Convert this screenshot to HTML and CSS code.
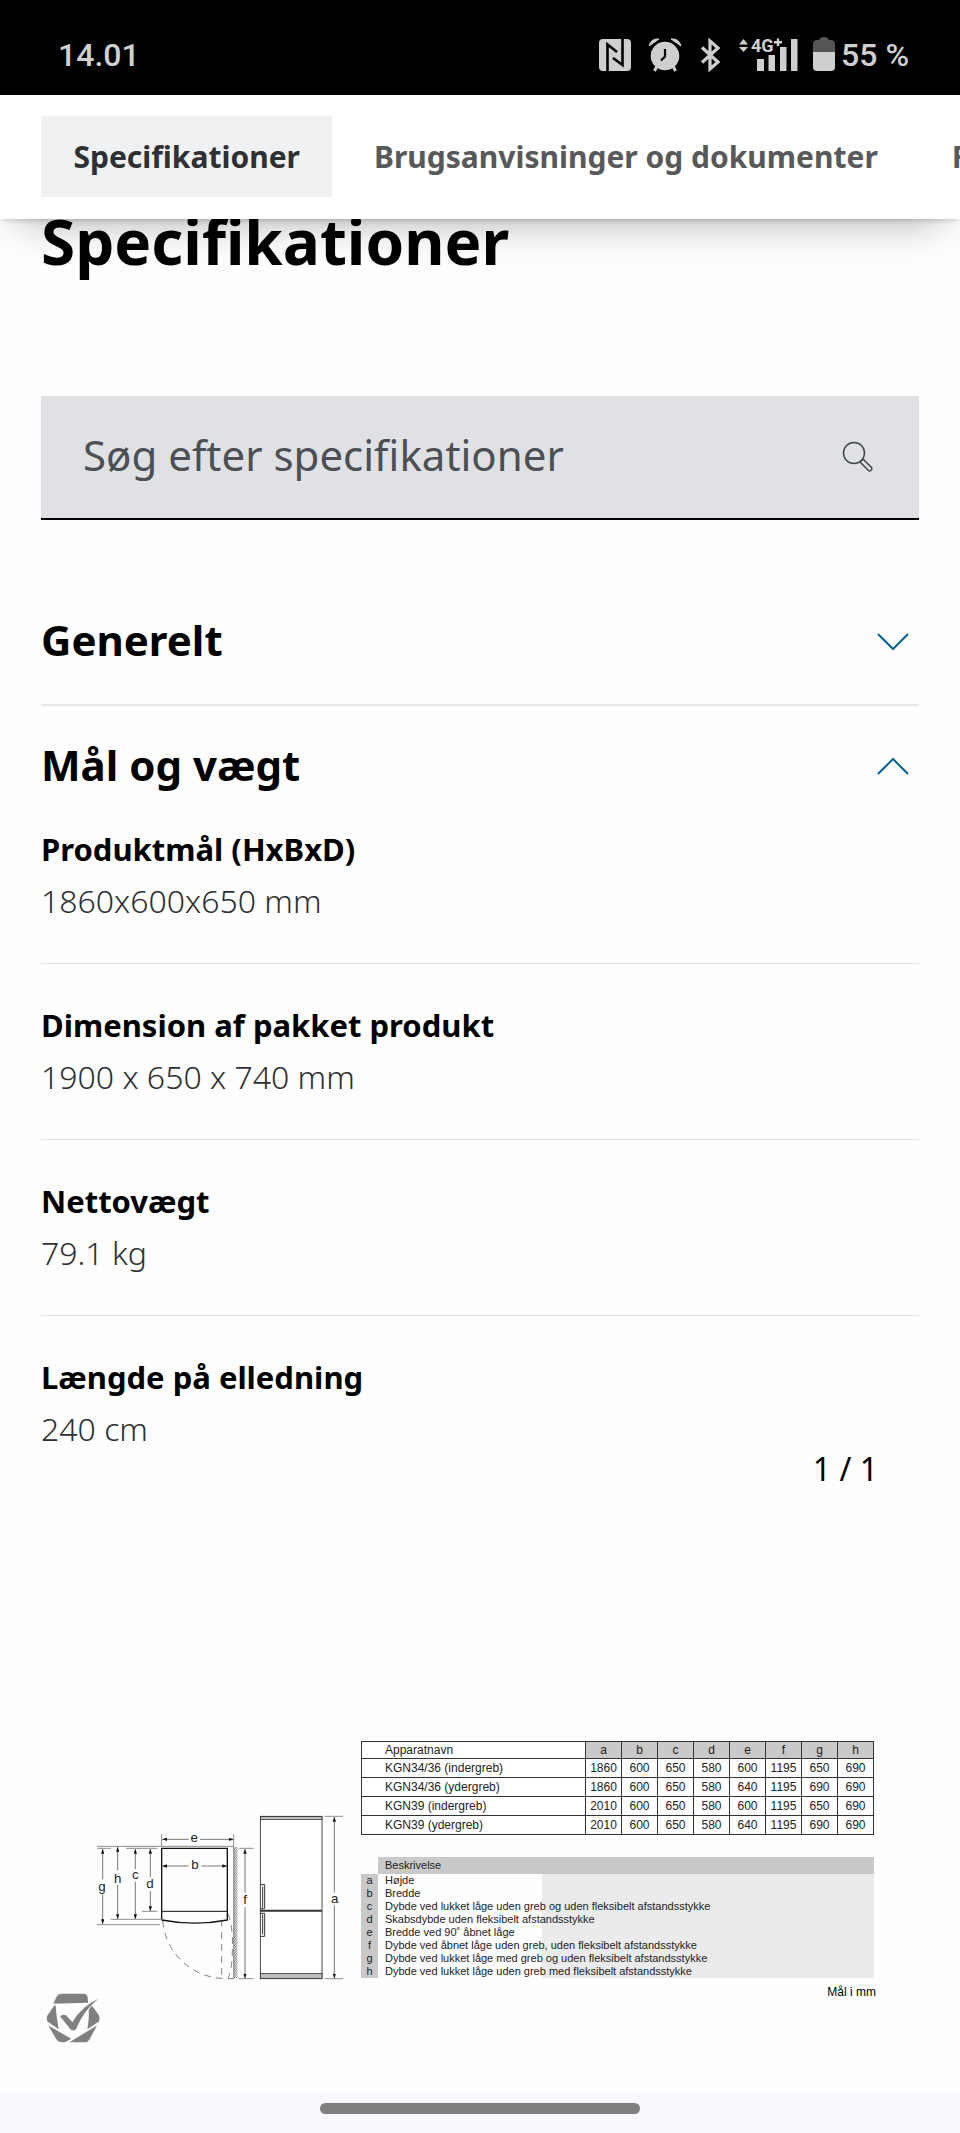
FILE: index.html
```html
<!DOCTYPE html>
<html lang="da">
<head>
    <meta charset="UTF-8">
    <meta name="viewport" content="width=device-width, initial-scale=1.0">
    <title>Specifikationer</title>
    <link rel="stylesheet" href="styles.css">
</head>
<body>
    <div class="status-bar">
        <span class="clock">14.01</span>
        <div class="status-icons">
            <svg width="32" height="34" viewBox="0 0 32 34">
                <rect x="0" y="1" width="32" height="32" rx="4" fill="#cfcfcf"/>
                <path d="M8.500 33V6.500L18 14M23.500 1V27L14 20" fill="none" stroke="#000" stroke-width="2.600"/>
            </svg>
            <svg width="32" height="34" viewBox="0 0 32 34">
                <path d="M0 8Q2 0 10 1ZM32 8Q30 0 22 1Z" fill="#cfcfcf" stroke="#cfcfcf" stroke-linejoin="round"/>
                <path d="M8 28L5.500 33M24 28L26.500 33" stroke="#cfcfcf" stroke-width="3"/>
                <circle cx="16" cy="18" r="14.300" fill="#cfcfcf"/>
                <path d="M16 11V18.500L12 22.500" fill="none" stroke="#000" stroke-width="2.200"/>
            </svg>
            <svg width="22" height="34" viewBox="0 0 22 34">
                <path d="M3 9.500L19 24L11 31V3L19 10L3 24.500" fill="none" stroke="#cfcfcf" stroke-width="3.200"/>
            </svg>
            <svg width="60" height="34" viewBox="0 0 60 34">
                <path d="M0 6.500L4.500 1L9 6.500ZM0 9L4.500 14L9 9Z" fill="#cfcfcf"/>
                <text x="12" y="14" class="network">4G</text>
                <path d="M39 0.500V8M35 4.200H43" stroke="#cfcfcf" stroke-width="2.400"/>
                <path d="M18 21h7v12h-7ZM29.500 17h6.500v16h-6.500ZM41 9h6.500v24h-6.500ZM52 1h6.500v32h-6.500Z" fill="#cfcfcf"/>
            </svg>
            <svg class="battery" width="22" height="34" viewBox="0 0 22 34">
                <path d="M0 14V6Q0 2 4 2H6Q7 -1 11 -1Q15 -1 16 2H18Q22 2 22 6V14Z" fill="#555"/>
                <path d="M0 14H22V29Q22 33 18 33H4Q0 33 0 29Z" fill="#cfcfcf"/>
            </svg>
            <span class="charge">55 %</span>
        </div>
    </div>

    <nav class="tabs">
        <div class="tab-list">
            <a href="#" class="tab">r</a>
            <a href="#specifikationer" class="tab active">Specifikationer</a>
            <a href="#" class="tab">Brugsanvisninger og dokumenter</a>
            <a href="#" class="tab">F</a>
        </div>
    </nav>

    <main>
        <h1 id="specifikationer">Specifikationer</h1>

        <form class="search">
            <input type="text" id="search-input" placeholder="Søg efter specifikationer" aria-label="Søg efter specifikationer">
            <label for="search-input">
                <svg width="32" height="32" viewBox="0 0 32 32" fill="none" stroke="#43464a" stroke-width="1.500">
                    <circle cx="12" cy="12" r="10.500"/>
                    <path d="M18 21L21 18L29.500 26.500Q30.500 28 29 29.500Q27.500 30.500 26.500 29.500Z"/>
                </svg>
            </label>
        </form>

        <section class="group">
            <button type="button" class="group-header" aria-expanded="false">
                <span>Generelt</span>
                <svg width="32" height="20" viewBox="0 0 32 20"><path d="M1 4L16 19L31 4"/></svg>
            </button>
        </section>

        <section class="group">
            <button type="button" class="group-header" aria-expanded="true">
                <span>Mål og vægt</span>
                <svg width="32" height="20" viewBox="0 0 32 20"><path d="M1 19L16 4L31 19"/></svg>
            </button>
            <dl class="specs">
                <div class="spec">
                    <dt>Produktmål (HxBxD)</dt>
                    <dd>1860x600x650 mm</dd>
                </div>
                <div class="spec">
                    <dt>Dimension af pakket produkt</dt>
                    <dd>1900 x 650 x 740 mm</dd>
                </div>
                <div class="spec">
                    <dt>Nettovægt</dt>
                    <dd>79.1 kg</dd>
                </div>
                <div class="spec">
                    <dt>Længde på elledning</dt>
                    <dd>240 cm</dd>
                </div>
            </dl>
        </section>

        <p class="counter">1 / 1</p>

        <div class="drawing">
            <svg class="diagram" width="264" height="238" viewBox="51 60 792 714">
                <defs>
                    <marker id="arrow" viewBox="0 0 14 10" refX="14" refY="5" markerWidth="14" markerHeight="10" markerUnits="userSpaceOnUse" orient="auto-start-reverse">
                        <path d="M0 0L14 5L0 10Z" fill="#111"/>
                    </marker>
                    <pattern id="wall" width="8" height="8" patternUnits="userSpaceOnUse">
                        <path d="M0 8L8 0" stroke="#222" stroke-width="2.500"/>
                    </pattern>
                </defs>

                <!-- extension lines -->
                <g stroke="#555" stroke-width="2">
                    <path d="M51 376H461M51 382H93M138 382H232M186 571H232M92 595H244M51 611H240"/>
                    <path d="M245 340V376M461 340V773M476 382H521M476 773H521M734 286H789M734 773H789"/>
                </g>

                <!-- dimension arrows -->
                <g stroke="#333" stroke-width="2">
                    <path d="M68 475V384" marker-end="url(#arrow)"/>
                    <path d="M68 520V609" marker-end="url(#arrow)"/>
                    <path d="M113 448V378" marker-end="url(#arrow)"/>
                    <path d="M113 492V594" marker-end="url(#arrow)"/>
                    <path d="M166 444V384" marker-end="url(#arrow)"/>
                    <path d="M166 482V594" marker-end="url(#arrow)"/>
                    <path d="M211 468V384" marker-end="url(#arrow)"/>
                    <path d="M211 510V570" marker-end="url(#arrow)"/>
                    <path d="M326 355H247" marker-end="url(#arrow)"/>
                    <path d="M360 355H460" marker-end="url(#arrow)"/>
                    <path d="M326 435H247" marker-end="url(#arrow)"/>
                    <path d="M364 435H441" marker-end="url(#arrow)"/>
                    <path d="M495 515V384" marker-end="url(#arrow)"/>
                    <path d="M495 558V772" marker-end="url(#arrow)"/>
                    <path d="M763 515V288" marker-end="url(#arrow)"/>
                    <path d="M763 553V772" marker-end="url(#arrow)"/>
                </g>

                <!-- cabinet from above -->
                <rect x="461" y="378" width="11" height="394" fill="url(#wall)"/>
                <path d="M245 595V382H442V597Q345 616 245 597" fill="none" stroke="#111" stroke-width="4"/>
                <path d="M245 571H442" stroke="#111" stroke-width="3"/>
                <path d="M248 600C255 690 330 773 440 773H461M425 597V770M444 578Q460 620 457 690Q456 750 444 772" fill="none" stroke="#444" stroke-width="2" stroke-dasharray="20 16"/>

                <!-- cabinet from the front -->
                <rect x="541" y="286" width="185" height="487" fill="#fff" stroke="#222" stroke-width="2.500"/>
                <rect x="541" y="287" width="185" height="9" fill="#bbb" stroke="#222" stroke-width="2"/>
                <rect x="541" y="757" width="185" height="16" fill="#bbb" stroke="#222" stroke-width="2"/>
                <path d="M541 569H726" stroke="#333" stroke-width="6"/>
                <path d="M541 491H554V563H541M541 577H554V646H541M548 497V560M548 580V640" fill="none" stroke="#333" stroke-width="3"/>

                <g class="dimension">
                    <text x="66" y="509">g</text>
                    <text x="113" y="486">h</text>
                    <text x="166" y="474">c</text>
                    <text x="210" y="502">d</text>
                    <text x="343" y="363">e</text>
                    <text x="345" y="445">b</text>
                    <text x="495" y="548">f</text>
                    <text x="764" y="545">a</text>
                </g>
            </svg>

            <div class="tables">
                <table class="models">
                    <thead>
                        <tr><th class="name">Apparatnavn</th><th>a</th><th>b</th><th>c</th><th>d</th><th>e</th><th>f</th><th>g</th><th>h</th></tr>
                    </thead>
                    <tbody>
                        <tr><td class="name">KGN34/36 (indergreb)</td><td>1860</td><td>600</td><td>650</td><td>580</td><td>600</td><td>1195</td><td>650</td><td>690</td></tr>
                        <tr><td class="name">KGN34/36 (ydergreb)</td><td>1860</td><td>600</td><td>650</td><td>580</td><td>640</td><td>1195</td><td>690</td><td>690</td></tr>
                        <tr><td class="name">KGN39 (indergreb)</td><td>2010</td><td>600</td><td>650</td><td>580</td><td>600</td><td>1195</td><td>650</td><td>690</td></tr>
                        <tr><td class="name">KGN39 (ydergreb)</td><td>2010</td><td>600</td><td>650</td><td>580</td><td>640</td><td>1195</td><td>690</td><td>690</td></tr>
                    </tbody>
                </table>

                <table class="legend">
                    <thead>
                        <tr><td class="key-empty"></td><th>Beskrivelse</th></tr>
                    </thead>
                    <tbody>
                        <tr><th>a</th><td>Højde</td></tr>
                        <tr><th>b</th><td>Bredde</td></tr>
                        <tr><th>c</th><td>Dybde ved lukket låge uden greb og uden fleksibelt afstandsstykke</td></tr>
                        <tr><th>d</th><td>Skabsdybde uden fleksibelt afstandsstykke</td></tr>
                        <tr><th>e</th><td>Bredde ved 90˚ åbnet låge</td></tr>
                        <tr><th>f</th><td>Dybde ved åbnet låge uden greb, uden fleksibelt afstandsstykke</td></tr>
                        <tr><th>g</th><td>Dybde ved lukket låge med greb og uden fleksibelt afstandsstykke</td></tr>
                        <tr><th>h</th><td>Dybde ved lukket låge uden greb med fleksibelt afstandsstykke</td></tr>
                    </tbody>
                </table>
            </div>
        </div>

        <div class="drawing-footer">
            <svg class="badge" width="54" height="50" viewBox="138 98 162 147" fill="#808080">
                <path d="M160 129L170 107Q174 99 183 99H250Q259 99 262 106L265 126Z"/>
                <path d="M163 134L142 164Q138 171 142 182L176 205Q169 170 167 134Z"/>
                <path d="M275 134L296 162Q301 171 297 182L262 205Q268 170 266 148Z"/>
                <path d="M145 194L168 234Q174 244 184 244H195L214 234Z"/>
                <path d="M291 194L269 235Q264 244 255 244H208Z"/>
                <path d="M180 166Q189 158 199 164L217 184Q245 137 295 114Q250 150 228 205Q220 213 212 206Z"/>
            </svg>
            <span class="unit">Mål i mm</span>
        </div>
    </main>

    <div class="home-bar">
        <div class="home-handle"></div>
    </div>
</body>
</html>
```
FILE: styles.css
```css
* {
    margin: 0;
    padding: 0;
    box-sizing: border-box;
}

body {
    display: flex;
    flex-direction: column;
    min-height: 100vh;
    font-family: "Noto Sans", sans-serif;
    background-color: #fefefe;
    color: #000;
}

svg {
    display: block;
    flex: none;
    overflow: visible;
}

/* Status bar */
.status-bar {
    display: flex;
    justify-content: space-between;
    align-items: center;
    height: 95px;
    padding: 15px 51px 0 58px;
    background-color: #000;
    color: #cfcfcf;
    font-family: Roboto, sans-serif;
    font-size: 32px;
    font-weight: 500;
}

.status-icons {
    display: flex;
    align-items: center;
    gap: 18px;
}

.network {
    font-family: Roboto, sans-serif;
    font-size: 18px;
    font-weight: 700;
    fill: #cfcfcf;
}

.battery {
    margin-left: -4px;
}

.charge {
    margin-left: -12px;
}

/* Tabs */
.tabs {
    position: relative;
    z-index: 1;
    padding: 21px 0 22px;
    background-color: #fff;
    box-shadow: 0 3px 6px -2px rgba(0, 0, 0, 0.2), 0 24px 40px -20px rgba(0, 0, 0, 0.3);
}

.tab-list {
    display: flex;
    gap: 10px;
    overflow: hidden;
}

.tab {
    flex: none;
    padding: 0 32px;
    font-size: 30px;
    font-weight: 700;
    line-height: 81px;
    color: #58595b;
    text-decoration: none;
}

.tab:first-child {
    margin-left: -46px;
}

.tab.active {
    background-color: #eff1f2;
    color: #2e3033;
}

main {
    padding: 0 41px;
}

h1 {
    margin-bottom: 133px;
    font-size: 62px;
    line-height: 44px;
}

/* Search */
.search {
    display: flex;
    align-items: center;
    height: 124px;
    margin-bottom: 61px;
    padding: 0 45px 0 42px;
    background-color: #e0e1e5;
    border-bottom: 2px solid #000;
}

.search input {
    flex: 1;
    min-width: 0;
    height: 100%;
    padding-bottom: 6px;
    border: none;
    outline: none;
    background: none;
    font-family: inherit;
    font-size: 42px;
}

.search input::placeholder {
    color: #4c4f53;
    opacity: 1;
}

/* Spec groups */
.group + .group {
    border-top: 2px solid #e6e7e8;
}

.group-header {
    display: flex;
    justify-content: space-between;
    align-items: center;
    width: 100%;
    padding: 29px 10px 29px 0;
    border: none;
    background: none;
    color: #000;
    font-family: inherit;
    font-size: 42px;
    font-weight: 700;
    line-height: 60px;
}

.group-header[aria-expanded="false"] {
    padding-bottom: 34px;
}

.group-header path {
    fill: none;
    stroke: #00629a;
    stroke-width: 2;
}

.spec {
    padding: 36px 0 37px;
    border-bottom: 1px solid #e0e1e2;
    line-height: 51px;
}

.spec:first-child {
    padding-top: 0;
}

.spec:last-child {
    padding-bottom: 0;
    border-bottom: none;
}

.spec dt {
    font-size: 31px;
    font-weight: 700;
}

.spec dd {
    font-size: 32px;
    font-weight: 300;
    color: #2e3033;
}

.counter {
    padding-right: 41px;
    font-size: 32px;
    line-height: 30px;
    text-align: right;
}

/* Dimension drawing */
.drawing {
    display: flex;
    margin-top: 257px;
    padding: 0 45px 0 56px;
    color: #222;
    font-family: "Liberation Sans", Arial, sans-serif;
    font-size: 12px;
}

.dimension {
    font-size: 40px;
    text-anchor: middle;
    fill: #222;
}

.tables {
    flex: 1;
    display: flex;
    flex-direction: column;
    gap: 22px;
}

.tables table {
    width: 100%;
    border-collapse: collapse;
    table-layout: fixed;
}

.tables th {
    font-weight: 400;
}

.models th,
.models td {
    height: 19px;
    border: 1px solid #333;
    line-height: 18px;
    text-align: center;
}

.models th {
    height: 17px;
    background-color: #c9c9c9;
    line-height: 16px;
}

.models .name {
    width: 224px;
    padding-left: 23px;
    background-color: #fff;
    text-align: left;
}

.legend {
    font-size: 11px;
    line-height: 13px;
}

.legend thead th {
    padding-left: 7px;
    background-color: #c9c9c9;
    line-height: 17px;
    text-align: left;
}

.legend .key-empty {
    width: 17px;
    background: none;
}

.legend tbody th {
    background-color: #c9c9c9;
}

.legend tbody td {
    padding-left: 7px;
    background: linear-gradient(to right, transparent 33%, #ebebeb 33%);
    white-space: nowrap;
}

.drawing-footer {
    display: flex;
    justify-content: space-between;
    padding: 6px 43px 0 5px;
    font-family: "Liberation Sans", Arial, sans-serif;
    font-size: 12px;
    line-height: 14px;
}

.badge {
    margin-top: 8px;
}

/* Gesture bar */
.home-bar {
    display: flex;
    justify-content: center;
    height: 43px;
    margin-top: auto;
    padding-top: 13px;
    background-color: #f9f9ff;
}

.home-handle {
    width: 320px;
    height: 11px;
    border-radius: 6px;
    background-color: #7f7f7f;
}
```
